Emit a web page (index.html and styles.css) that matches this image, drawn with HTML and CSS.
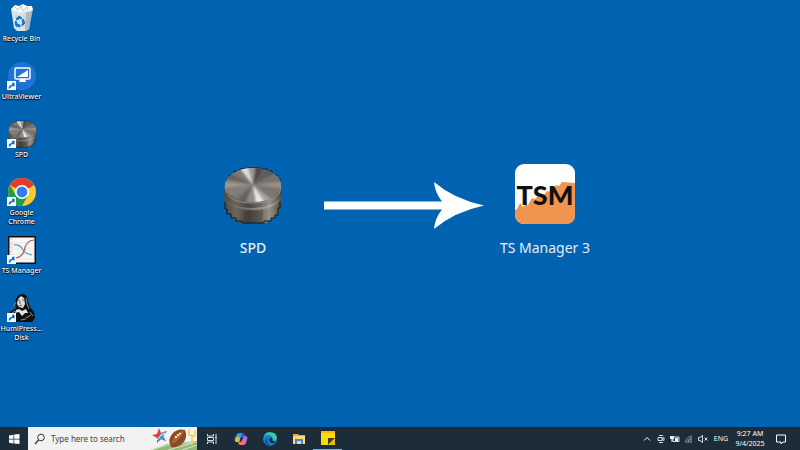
FILE: index.html
```html
<!DOCTYPE html>
<html lang="en">
<head>
<meta charset="utf-8">
<title>Desktop</title>
<link rel="stylesheet" href="styles.css">
</head>
<body>
<svg class="defs" aria-hidden="true">
  <defs>
    <linearGradient id="side" x1="0" x2="1"><stop offset="0" stop-color="#4c483f"/><stop offset=".2" stop-color="#6b665d"/><stop offset=".42" stop-color="#4a463f"/><stop offset=".62" stop-color="#6c6861"/><stop offset=".78" stop-color="#97938c"/><stop offset="1" stop-color="#4b463c"/></linearGradient>
    <linearGradient id="edge" x1="0" x2="1"><stop offset="0" stop-color="#5c574e"/><stop offset=".45" stop-color="#918d87"/><stop offset=".8" stop-color="#b8b5b0"/><stop offset="1" stop-color="#5d584f"/></linearGradient>
    <clipPath id="face"><ellipse cx="30" cy="21" rx="28" ry="17"/></clipPath>
    <filter id="brushed"><feGaussianBlur stdDeviation="1"/></filter>
    <symbol id="puck" viewBox="0 0 60 60">
      <path d="M2 20 1 34l2 10 2 6 8 7 7 2h23l8-5 5-5 2-9 1-8V20Z" fill="url(#side)"/>
      <path d="M1 33q9 11 28 11t30-11v2q-9 11-30 11T1 35Z" fill="url(#edge)" opacity=".7"/>
      <path d="M20 47v12h20V46q-10 2-20 1Z" fill="#302d29" opacity=".3"/>
      <path d="M2 38v7h2v5h4v4h5v3h6v2h22v-2h7v-3h4v-3h3v-7h2v-7M3 15h3v-4h5V7h6V5h7V4h13v1h7v2h5v4h5v4h3v6" fill="none" stroke="#10161b"/>
      <g clip-path="url(#face)">
        <ellipse cx="30" cy="21" rx="29" ry="18" fill="#7c7976"/>
        <g filter="url(#brushed)">
          <path d="M30 21 10-4h13Z" fill="#dedede"/>
          <path d="M30 21 23-4h9Z" fill="#9b9a99"/>
          <path d="M30 21 34-4h14Z" fill="#4d4a48"/>
          <path d="M30 21 50-4 66 2Z" fill="#5f5c59"/>
          <path d="M30 21 66 2v15Z" fill="#77726c"/>
          <path d="M30 21 66 17v8Z" fill="#989189"/>
          <path d="M30 21 66 25v10Z" fill="#77736f"/>
          <path d="M30 21 60 44H46Z" fill="#a5a3a1"/>
          <path d="M30 21 47 46H34Z" fill="#e7e7e6"/>
          <path d="M30 21 33 46H21Z" fill="#8f8d8b"/>
          <path d="M30 21 18 46H3Z" fill="#65625f"/>
          <path d="M30 21-6 39V28Z" fill="#827e79"/>
          <path d="M30 21-6 25v-8Z" fill="#9b968f"/>
          <path d="M30 21-6 12V2Z" fill="#65615e"/>
        </g>
      </g>
      <path d="M2 22q1 17 28 17t28-17" fill="none" stroke="#96928c" stroke-width="1"/>
    </symbol>
    <symbol id="shortcut" viewBox="0 0 8 8"><path fill="#fff" d="M0 0h8v8H0z"/><path d="M1.500 6.700q-.2-3 3-3.400V1.600h2.200v3.600L5.600 4.400Q3 4.400 3 6.700Z" fill="#1268c4"/></symbol>
  </defs>
</svg>

<main class="desktop">
  <nav class="shortcuts" aria-label="Desktop icons">
    <a class="shortcut" href="#">
      <span class="picture"><svg viewBox="0 0 30 30" aria-hidden="true">
        <path d="M4 6 25 5 22 26 19 28H10L7 25Z" fill="#dce2e6"/><path d="M19 9 26 6 22 26 18 28Z" fill="#aeb9c1"/>
        <path d="M4 6 8 2l4 1 4-2 4 2 5 0 1 4-5 2-4-1-4 2-4-2Z" fill="#fafafa"/><path d="m8 4 3 3 3-4 2 5 4-4 1 4M9 12l1 13M17 12v13" stroke="#c1c9ce" fill="none"/>
        <path d="m9 16 3-3 3 2-1 1-2-1-1 2ZM16 16l2 4-3 3v-2l1-1-1-2ZM9 18l1 3 3 1v2l-4-1-1-4Z" fill="#1677cc" stroke="#1677cc"/>
      </svg></span><span class="label">Recycle Bin</span></a>
    <a class="shortcut" href="#">
      <span class="picture"><svg viewBox="0 0 30 30" aria-hidden="true">
        <circle cx="15" cy="15" r="14" fill="#1f73d2"/><rect x="8" y="7" width="15" height="11" rx="1" fill="#1f73d2" stroke="#fff" stroke-width="1.500"/><path d="M21 9v7H10Z" fill="#fff"/><path d="M13 18h5l1 3H12Z" fill="#fff"/>
        <use href="#shortcut" x="0" y="20" width="9" height="9"/>
      </svg></span><span class="label">UltraViewer</span></a>
    <a class="shortcut" href="#">
      <span class="picture"><svg viewBox="0 0 30 30" aria-hidden="true">
        <use href="#puck" x="1" y="0" width="29" height="29"/><use href="#shortcut" x="0" y="20" width="9" height="9"/>
      </svg></span><span class="label">SPD</span></a>
    <a class="shortcut" href="#">
      <span class="picture"><svg viewBox="0 0 30 30" aria-hidden="true">
        <circle cx="15" cy="15" r="14" fill="#fcc934"/><path d="M15 15 2.900 8A14 14 0 0 1 27.100 8Z" fill="#e33b2e"/>
        <path d="M2.900 8 9 18.500 15 22 21 18.500 15 29A14 14 0 0 1 2.900 8Z" fill="#1c9d50"/>
        <circle cx="15" cy="15" r="7" fill="#fff"/><circle cx="15" cy="15" r="5.400" fill="#327cf0"/>
        <use href="#shortcut" x="0" y="20" width="9" height="9"/>
      </svg></span><span class="label">Google Chrome</span></a>
    <a class="shortcut" href="#">
      <span class="picture"><svg viewBox="0 0 30 30" aria-hidden="true">
        <path d="M1 1h28v28H1z" fill="#111"/><path d="M2.500 2.500h25v25h-25z" fill="#f8f6f2"/><path d="M5 3v24M2.500 24H27M2.500 19H27M2.500 14H27M2.500 8H27" stroke="#e2deda" stroke-width=".6"/>
        <path d="M7 10q6-1 9 5 3 4 9 5" fill="none" stroke="#5b9ace" stroke-width="1.200"/><path d="M9 23q6-1 8-7 2-11 10-11" fill="none" stroke="#a85f5d" stroke-width="1.200"/><path d="M4 4v20" stroke="#d8a064" stroke-dasharray="1 3"/>
        <use href="#shortcut" x="0" y="20" width="9" height="9"/>
      </svg></span><span class="label">TS Manager</span></a>
    <a class="shortcut" href="#">
      <span class="picture"><svg viewBox="0 0 30 30" aria-hidden="true">
        <path d="M9 6q2-5 7-5 5 1 5 7l2 6 4 5 1 6-3 4H8L2 25l1-6 6-4-1-4Z" fill="#111"/>
        <path d="m11 6 3-3 3 2 1 6-2 4-4-1-2-3Z" fill="#ddd"/><path d="m11 7 2 0M15 7l2 0M13 8l0 3M12 13l3-1" stroke="#444" stroke-width=".8"/>
        <path d="m9 17 3-1 3 2 4-2 2 4-3 0-3 3-3-4-4 1Z" fill="#e4e4e4"/><path d="m19 25 5-3M14 27l5-1M5 20l3-2M19 5l1 6 2 5M7 13l2-4M23 19l3 4" stroke="#999" fill="none" stroke-width=".9"/>
        <use href="#shortcut" x="0" y="20" width="9" height="9"/>
      </svg></span><span class="label">HumiPress... Disk</span></a>
  </nav>

  <section class="stage" aria-label="SPD becomes TS Manager 3">
    <figure class="app">
      <svg class="app-icon" viewBox="0 0 60 60" aria-hidden="true"><use href="#puck" width="60" height="60"/></svg>
      <figcaption class="app-name strong">SPD</figcaption>
    </figure>
    <svg class="arrow" viewBox="0 0 160 48" aria-hidden="true"><path d="M0 19.500H118Q111 11 110 0 130 17 160 23.500 130 30 110 47 111 36 118 27.500H0Z" fill="#fff"/></svg>
    <figure class="app">
      <svg class="app-icon" viewBox="0 0 60 60" aria-hidden="true">
        <rect width="60" height="60" rx="9" fill="#fff"/>
        <path d="M0 46l2-1 3-6 3 4 3-3 2 1 4-7 3 1 4-4 4 1 4-5 4 1 5-7 3 1 3-4 13 1v32a8 8 0 0 1-8 9H9a9 9 0 0 1-9-9Z" fill="#ef9550"/>
        <text class="tsm" x="30" y="41" text-anchor="middle">TSM</text>
      </svg>
      <figcaption class="app-name">TS Manager 3</figcaption>
    </figure>
  </section>
</main>

<footer class="taskbar">
  <button class="task start" aria-label="Start"><svg class="glyph" viewBox="0 0 12 12"><path d="m1 2.400 4.500-.7v4H1ZM6.200 1.600 11.500 1v4.700H6.200ZM1 6.400h4.500v4L1 9.700ZM6.200 6.400h5.300v4.700l-5.300-.7Z" fill="#fff"/></svg></button>
  <div class="search">
    <svg class="lens" viewBox="0 0 12 12" aria-hidden="true"><circle cx="7" cy="4.500" r="3.300" fill="none" stroke="#333"/><path d="M4.600 7 1 11" stroke="#333" stroke-width="1.200"/></svg>
    <input class="search-input" type="text" placeholder="Type here to search" aria-label="Search">
    <svg class="football" viewBox="0 0 46 23" aria-hidden="true">
      <path d="M0 23 16 17 46 14v9Z" fill="#91b877"/><path d="m0 23 16-5 30-3M17 23l25-7M31 23l15-5" stroke="#d5e4ca" fill="none"/>
      <path d="m8 1 2 5 6-2-4 5 3 5-5-2-4 4V11L1 8l5-1Z" fill="#e13b42"/><path d="m10 6 6-2-4 5 3 5-5-2-4 4 1-5Z" fill="#4292d4"/><path d="m6 13 4-5 4-2" stroke="#fff" fill="none"/>
      <path d="M20 20q-4-8 2-14 5-5 12-3 3 8-2 13-5 5-12 4Z" fill="#8a4a26"/><path d="M21 17q0-7 5-10 3-3 7-3-2 5-6 9-3 3-6 4Z" fill="#ac653b"/><path d="m24 11 6-5M24 9l2 2M26 7l2 2M28 6l2 1" stroke="#fff" stroke-width=".9"/>
      <path d="M38 2v6l6 1V3M41 9v9" fill="none" stroke="#f3cf44" stroke-width="1.500"/>
    </svg>
  </div>
  <button class="task" aria-label="Task view"><svg class="glyph" viewBox="0 0 12 12"><path d="M1.500 1v2h6V1M1.500 11V9h6v2M1.500 4.500h6v3h-6ZM10 1v2M10 6v5" fill="none" stroke="#ddd"/><path d="M9 3.500h2v2H9z" fill="#ddd"/></svg></button>
  <button class="task" aria-label="Copilot"><svg class="app-glyph" viewBox="0 0 14 14">
    <path d="M3 2q1-1 3-1h3q1 0 2 2L9 5H7L5 10H2q-2-1-1-4Z" fill="#2e9ee0"/><path d="M1.500 6 5 4 6 8 5 10H2q-1.500-1-.5-4Z" fill="#d7bd34"/><path d="M8 1h1q2 0 2 3h-3L7 6Z" fill="#274ec0"/><path d="M10 4h2q2 1 1 4l-1 3q-1 2-3 2H6q-1 0-2-3h2q2 0 2-2Z" fill="#bf65df"/><path d="M4 10h3l2-2 3 3q-1 2-3 2H6q-1 0-2-3Z" fill="#f27568"/></svg></button>
  <button class="task" aria-label="Edge"><svg class="app-glyph" viewBox="0 0 14 14">
    <circle cx="7" cy="7" r="6.800" fill="#168bd2"/><path d="M.5 6Q1 .2 7 .2q7 0 6.800 6-.4 3-4 2.500 0-4-4-4Q2 5 .5 6Z" fill="#3bcaaa"/><path d="M.3 6Q2 2 6 3q4 1 3.500 4-1-2-3-1-2 2 0 5 2 2 5.500 0-2 3-6 2.500Q0 12 .3 6Z" fill="#1681d2"/><path d="M5 6Q3 12 9 13.300 5 14.500 2 11 1 7 5 6Z" fill="#1658a6"/><path d="M7 6q3-1 2.500 2.500 1 1 3 .5l-1 2Q7 12 6 8Z" fill="#1c2c38"/></svg></button>
  <button class="task" aria-label="File Explorer"><svg class="app-glyph" viewBox="0 0 14 14"><path d="M1 2h5l1 1h6v9H1Z" fill="#e9a82e"/><path d="M1 4h12v8H1z" fill="#ffda77"/><path d="M3 7h8v5H9V9H5v3H3Z" fill="#378cdb"/></svg></button>
  <button class="task active" aria-label="Sticky Notes"><svg class="app-glyph" viewBox="0 0 14 14"><path d="M0 0h14v14H0z" fill="#fddc0b"/><path d="M0 0h14v2H0z" fill="#f2bd0b"/><path d="M7 7h7l-7 7Z" fill="#393b35"/><path d="M14 7v7H7Z" fill="#e3b90c"/></svg></button>
  <div class="tray">
    <button class="tray-item" aria-label="Hidden icons"><svg class="tray-glyph" viewBox="0 0 10 10"><path d="m2 6.500 3-3 3 3" fill="none" stroke="#fff"/></svg></button>
    <button class="tray-item" aria-label="Meet now"><svg class="tray-glyph" viewBox="0 0 10 10"><path d="M2 3.500h4v3H2ZM6 4.500l2-1v3l-2-1M3 1.500h4M3 8.500h4" fill="none" stroke="#ddd"/></svg></button>
    <button class="tray-item" aria-label="Battery"><svg class="tray-glyph" viewBox="0 0 10 10"><path d="M3 3h6v4.500H3Z" fill="none" stroke="#ddd"/><path d="M5 4h3v3H5zM0 2h4v3H2.500v3h-1V5H0Z" fill="#eee"/></svg></button>
    <button class="tray-item" aria-label="Network"><svg class="tray-glyph" viewBox="0 0 10 10"><path d="M1 8 8 1v8H1Z" fill="#46535e"/><path d="M1.500 8Q2 3 8 2M4 8.500Q4 5 8 4.500M6 8.500 8 7" stroke="#9aa3a9" fill="none" stroke-width=".8"/></svg></button>
    <button class="tray-item" aria-label="Volume muted"><svg class="tray-glyph" viewBox="0 0 10 10"><path d="M.5 3.500H2L4.500 1.500v7L2 6.500H.5ZM6.500 3.500l3 3M9.500 3.500l-3 3" fill="none" stroke="#eee" stroke-width=".9"/></svg></button>
    <button class="language">ENG</button>
    <button class="clock"><time>9:27 AM<br>9/4/2025</time></button>
    <button class="tray-item notice" aria-label="Notifications"><svg class="glyph" viewBox="0 0 12 12"><path d="M1.500 2h9v7H8L6 11V9H1.500Z" fill="none" stroke="#fff"/></svg></button>
  </div>
</footer>
</body>
</html>
```

FILE: styles.css
```css
* { box-sizing: border-box; }

body {
  margin: 0;
  min-height: 100vh;
  display: flex;
  flex-direction: column;
  background: #0063b1;
  color: #fff;
  font-family: "Noto Sans", "Open Sans", sans-serif;
}

svg { display: block; }
.defs { position: absolute; width: 0; height: 0; }
button { border: 0; padding: 0; background: none; color: inherit; font: inherit; }
a { color: inherit; text-decoration: none; }

.desktop { flex: 1; display: flex; }

.shortcuts {
  width: 43px;
  padding-top: 3px;
  display: grid;
  grid-auto-rows: 58px;
  align-content: start;
}
.shortcut { display: flex; flex-direction: column; align-items: center; gap: 1px; }
.picture { width: 30px; height: 30px; }
.label {
  width: 43px;
  font-size: 7px;
  font-weight: 500;
  line-height: 9px;
  text-align: center;
  text-shadow: 0 1px 1px #000, 0 0 2px #000;
}

.stage {
  flex: 1;
  display: flex;
  justify-content: center;
  align-items: flex-start;
  align-self: center;
  padding: 0 30px 6px 0;
}
.app { margin: 0; display: flex; flex-direction: column; align-items: center; gap: 14px; }
.app-icon { width: 60px; height: 60px; }
.app-name { font-size: 14px; line-height: 20px; white-space: nowrap; color: #e6eef6; }
.strong { font-weight: 500; }
.arrow { width: 160px; height: 48px; margin: 18px 16px 0 41px; }
.tsm { font: 900 27px Lato, sans-serif; fill: #101010; }

.taskbar { height: 23px; display: flex; background: #1c2c38; }
.task { width: 29px; display: grid; place-items: center; }
.start { width: 28px; }
.active { border-bottom: 1px solid #76b9ed; }
.glyph { width: 12px; height: 12px; }
.app-glyph { width: 14px; height: 14px; }

.search { width: 169px; display: flex; align-items: center; background: #f2f2f2; }
.lens { width: 12px; height: 12px; margin: 0 5px 0 6px; }
.search-input {
  flex: 1;
  min-width: 0;
  border: 0;
  padding: 0;
  background: none;
  font: 8px "Noto Sans", sans-serif;
}
.search-input::placeholder { color: #444; opacity: 1; }
.football { width: 46px; height: 23px; }

.tray { margin-left: auto; display: flex; align-items: center; font-size: 7px; line-height: 10px; }
.tray-item { width: 14px; display: grid; place-items: center; }
.tray-glyph { width: 10px; height: 10px; }
.language { width: 22px; }
.clock { width: 36px; text-align: center; }
.notice { width: 26px; margin-right: 6px; }
```
